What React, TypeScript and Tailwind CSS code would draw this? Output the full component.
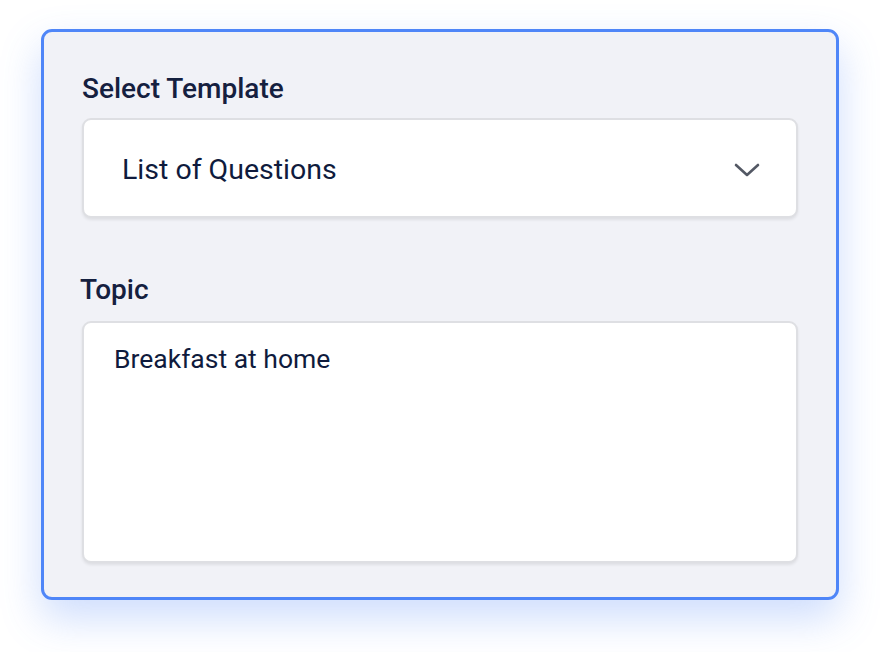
import { useState } from "react"

export default function App() {
  const [template] = useState("List of Questions")
  const [topic, setTopic] = useState("Breakfast at home")

  return (
    <div className="min-h-[652px] bg-white pt-[29px] font-['Roboto',sans-serif]">
      <div className="mx-auto w-[798px] rounded-[11px] border-[3px] border-[#4f86f8] bg-[#f1f2f7] px-[38px] pt-[41px] pb-[34px] shadow-[0_18px_40px_rgba(79,134,248,0.28)]">
        <label className="block text-[28px] leading-[32px] font-medium text-[#15203f]">
          Select Template
        </label>
        <div className="mt-[13px] flex h-[100px] items-center justify-between rounded-[9px] border-2 border-[#dedfe3] bg-white pl-[38px] pr-[36px] shadow-[0_2px_3px_rgba(0,0,0,0.08)]">
          <span className="mt-[3px] text-[28.5px] leading-[32px] text-[#0f1b3d]">{template}</span>
          <svg width="26" height="15" viewBox="0 0 26 15" fill="none" className="mt-[4px]">
            <path
              d="M2 2L13 12L24 2"
              stroke="#535864"
              strokeWidth="2.6"
              strokeLinecap="round"
              strokeLinejoin="round"
            />
          </svg>
        </div>

        <label className="mt-[56px] block text-[28px] leading-[32px] font-medium text-[#15203f] -ml-[2px]">
          Topic
        </label>
        <textarea
          value={topic}
          onChange={(e) => setTopic(e.target.value)}
          className="mt-[15px] block h-[242px] w-full resize-none rounded-[9px] border-2 border-[#dedfe3] bg-white px-[30px] pt-[20px] text-[26.5px] leading-[32px] text-[#0f1b3d] shadow-[0_2px_3px_rgba(0,0,0,0.08)] outline-none"
        />
      </div>
    </div>
  )
}
